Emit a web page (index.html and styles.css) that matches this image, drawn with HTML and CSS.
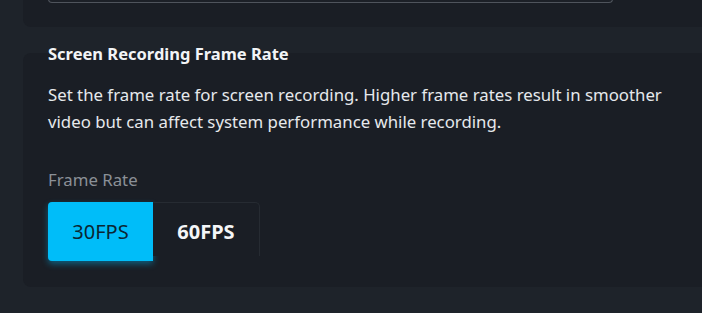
FILE: index.html
```html
<!DOCTYPE html>
<html>
<head>
<meta charset="utf-8">
<link rel="stylesheet" href="styles.css">
</head>
<body>
<div class="page">
  <div class="card card-top">
    <div class="input"></div>
  </div>
  <h3 class="title">Screen Recording Frame Rate</h3>
  <div class="card card-main">
    <p class="desc">Set the frame rate for screen recording. Higher frame rates result in smoother video but can affect system performance while recording.</p>
    <div class="label">Frame Rate</div>
    <div class="seg">
      <button class="opt active">30FPS</button>
      <button class="opt">60FPS</button>
    </div>
  </div>
</div>
</body>
</html>
```
FILE: styles.css
```css
html, body {
  margin: 0;
  padding: 0;
  background: #1e232a;
  height: 313px;
  overflow: hidden;
}
.page {
  font-family: "Noto Sans", "Open Sans", sans-serif;
  color: #e8ebee;
  padding-left: 23px;
}
.card {
  background: #1a1e25;
  border-radius: 8px 0 0 8px;
}
.card-top {
  margin-top: -30px;
  padding: 0 0 24px 25px;
}
.input {
  width: 563px;
  height: 32px;
  border: 1px solid #4f545c;
  border-top: none;
  border-radius: 0 0 4px 4px;
  background: #1c2027;
}
.title {
  margin: 17px 0 0 25px;
  font-size: 16.5px;
  line-height: 20px;
  font-weight: 700;
  color: #f2f4f6;
  position: relative;
}
.card-main {
  margin-top: -11px;
  padding: 28px 0 26px 25px;
}
.desc {
  margin: 0;
  font-size: 16.8px;
  line-height: 27px;
  color: #e6e9ec;
  width: 625px;
}
.label {
  margin-top: 35px;
  font-size: 16.8px;
  line-height: 20px;
  color: #8b9097;
}
.seg {
  margin-top: 12px;
  display: flex;
  height: 59px;
}
.opt {
  font-family: "Noto Sans", "Open Sans", sans-serif;
  font-size: 20px;
  border: none;
  margin: 0;
  padding: 0;
  cursor: pointer;
}
.opt.active {
  width: 105px;
  background: #00bdf9;
  color: #0b2633;
  border-radius: 4px 0 0 4px;
  box-shadow: 0 3px 6px rgba(0, 170, 230, 0.45);
  font-weight: 400;
}
.opt:not(.active) {
  width: 107px;
  height: 54px;
  background: #1a1e25;
  color: #f4f6f8;
  font-weight: 700;
  border: 1px solid #262b32;
  border-left: none;
  border-bottom: none;
  border-radius: 0 5px 0 0;
  padding-top: 4px;
}
```
